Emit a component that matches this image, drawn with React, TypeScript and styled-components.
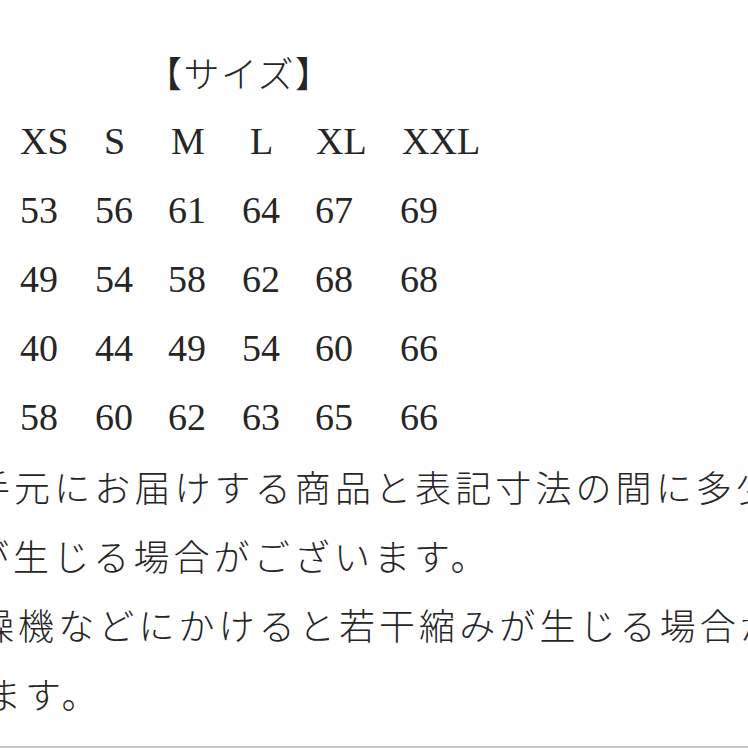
import React from 'react';
import styled, { createGlobalStyle } from 'styled-components';

const Global = createGlobalStyle`
  html, body { margin: 0; padding: 0; background: #ffffff; }
  body { width: 748px; height: 748px; overflow: hidden; }
`;

const Page = styled.div`
  width: 748px;
  height: 748px;
  box-sizing: border-box;
  overflow: hidden;
  padding-top: 38px;
  display: flex;
  flex-direction: column;
  color: #262626;
  background: #ffffff;
  border-bottom: 2px solid #c6c6c6;
`;

const Title = styled.h1`
  margin: 0 0 0 146px;
  height: 69px;
  line-height: 69px;
  font-family: "Noto Sans CJK JP", sans-serif;
  font-size: 36px;
  font-weight: 300;
  letter-spacing: 1.5px;
  white-space: nowrap;
`;

const Table = styled.div`
  display: grid;
  grid-template-columns: 75px 73px 74px 73px 85px 1fr;
  grid-auto-rows: 69px;
  padding-left: 20px;
  font-family: "Liberation Serif", "Times New Roman", serif;
  font-size: 38px;
  line-height: 69px;
`;

const Cell = styled.div<{ $shift?: number }>`
  padding-left: ${(p) => p.$shift ?? 0}px;
  white-space: nowrap;
`;

const Notes = styled.div`
  display: flex;
  flex-direction: column;
  font-family: "Noto Sans CJK JP", sans-serif;
  font-weight: 300;
  font-size: 36px;
  letter-spacing: 4.1px;
  line-height: 69px;
`;

const Line = styled.div<{ $offset: number }>`
  height: 69px;
  margin-left: ${(p) => p.$offset}px;
  white-space: nowrap;
`;

const sizes = ['XS', 'S', 'M', 'L', 'XL', 'XXL'];
const headerShift = [0, 9, 3, 8, 1, 2];
const rows = [
  [53, 56, 61, 64, 67, 69],
  [49, 54, 58, 62, 68, 68],
  [40, 44, 49, 54, 60, 66],
  [58, 60, 62, 63, 65, 66],
];

const notes: { text: string; offset: number }[] = [
  { text: '手元にお届けする商品と表記寸法の間に多少', offset: -26 },
  { text: 'が生じる場合がございます。', offset: -27 },
  { text: '燥機などにかけると若干縮みが生じる場合が', offset: -22 },
  { text: 'ます。', offset: -15 },
];

export default function App() {
  return (
    <>
      <Global />
      <Page>
        <Title>【サイズ】</Title>
        <Table>
          {sizes.map((s, i) => (
            <Cell key={s} $shift={headerShift[i]}>
              {s}
            </Cell>
          ))}
          {rows.map((r, ri) =>
            r.map((v, ci) => <Cell key={`${ri}-${ci}`}>{v}</Cell>)
          )}
        </Table>
        <Notes>
          {notes.map((n, i) => (
            <Line key={i} $offset={n.offset}>
              {n.text}
            </Line>
          ))}
        </Notes>
      </Page>
    </>
  );
}
